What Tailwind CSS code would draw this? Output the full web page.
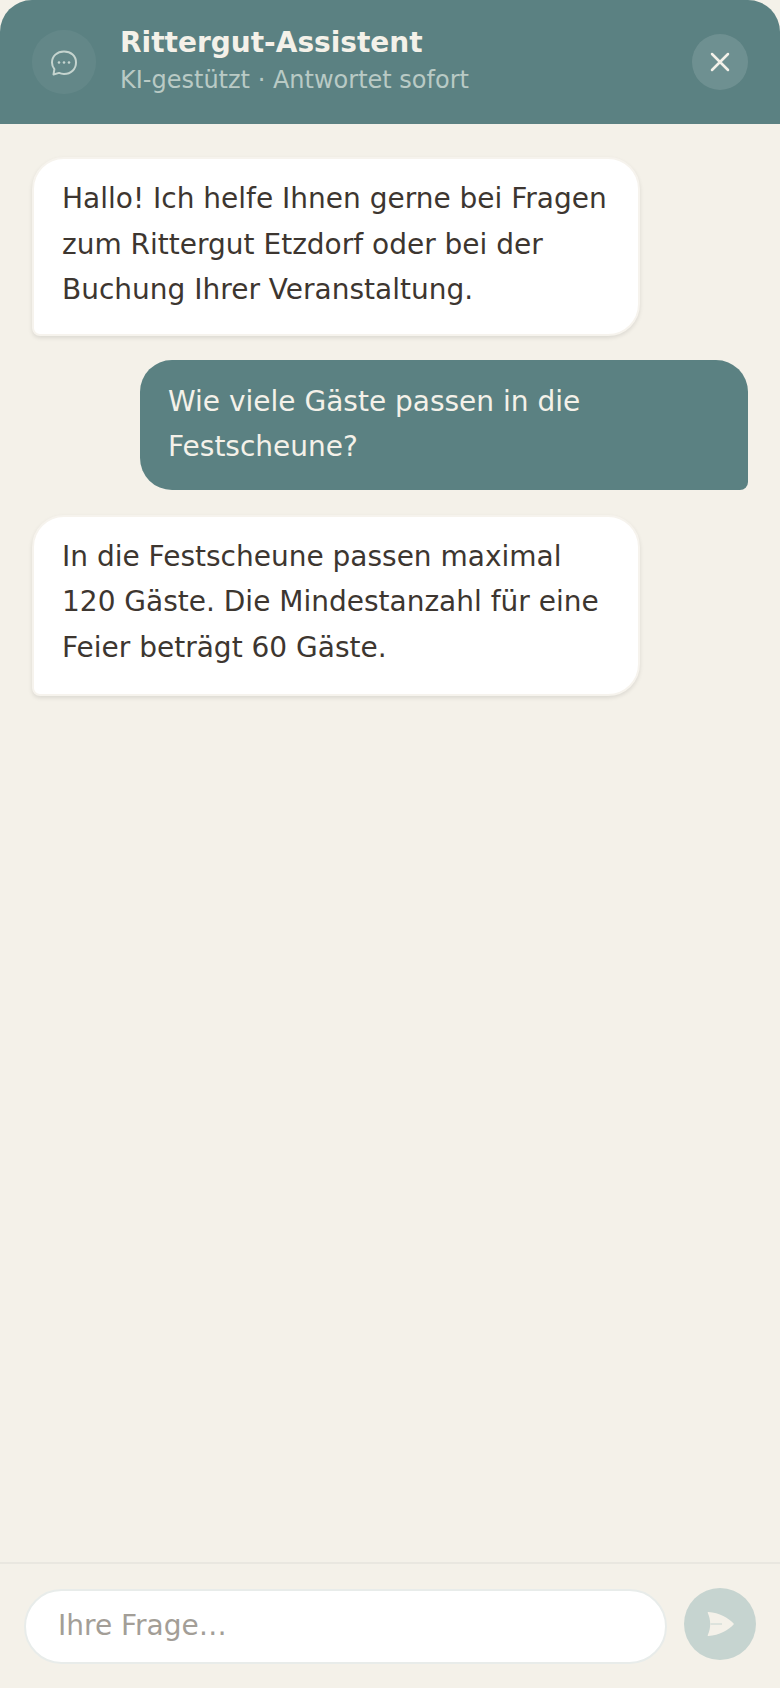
<!DOCTYPE html>
<html lang="de">
<head>
  <meta charset="UTF-8" />
  <meta name="viewport" content="width=device-width, initial-scale=1.0" />
  <title>Rittergut-Assistent</title>
  <script src="https://cdn.jsdelivr.net/npm/@tailwindcss/browser@4"></script>
</head>
<body class="bg-[#f4f1e9] font-['DejaVu_Sans',sans-serif]">
  <div class="w-[780px] h-[1688px] bg-[#f4f1e9] flex flex-col overflow-hidden">

    <!-- Header -->
    <div class="h-[124px] shrink-0 bg-[#5b8182] rounded-t-[32px] flex items-center pl-8 pr-8">
      <div class="w-16 h-16 rounded-full bg-white/5 flex items-center justify-center shrink-0">
        <svg width="30" height="30" viewBox="0 -1 30 30" fill="none" stroke="#c5d4cf" stroke-width="2" stroke-linejoin="round">
          <path d="M15 3.500c-7 0-12 4.700-12 11 0 2.600.9 4.900 2.400 6.700l-.9 5.300 5.600-1.600c1.500.7 3.100 1 4.900 1 7 0 12-4.800 12-11.400S22 3.500 15 3.500z"/>
          <circle cx="10" cy="14.500" r="1.300" fill="#c5d4cf" stroke="none"/>
          <circle cx="15" cy="14.500" r="1.300" fill="#c5d4cf" stroke="none"/>
          <circle cx="20" cy="14.500" r="1.300" fill="#c5d4cf" stroke="none"/>
        </svg>
      </div>
      <div class="ml-6 flex-1">
        <div class="text-[28px] leading-[36px] font-bold text-[#f4f1e9] -mt-px">Rittergut-Assistent</div>
        <div class="text-[24px] leading-[36px] text-[#b9cac5] mt-px">KI-gestützt · Antwortet sofort</div>
      </div>
      <button class="w-14 h-14 rounded-full bg-white/12 flex items-center justify-center">
        <svg width="24" height="24" viewBox="0 0 24 24" fill="none" stroke="#f4f1e9" stroke-width="2.500" stroke-linecap="round">
          <path d="M4 4l16 16M20 4L4 20"/>
        </svg>
      </button>
    </div>

    <!-- Messages -->
    <div class="flex-1 flex flex-col gap-6 pt-[33px] px-8">
      <div class="w-[608px] bg-white border-2 border-[#f6f3ed] rounded-[32px] rounded-bl-[8px] pl-7 pr-7 pt-[17px] pb-[21px] text-[28px] leading-[45.5px] text-[#3d3630] shadow-[0_2px_4px_rgba(0,0,0,0.1)]">
        Hallo! Ich helfe Ihnen gerne bei Fragen zum Rittergut Etzdorf oder bei der Buchung Ihrer Veranstaltung.
      </div>
      <div class="w-[608px] self-end bg-[#5b8182] rounded-[32px] rounded-br-[8px] px-7 pt-[19px] pb-5 text-[28px] leading-[45.5px] text-[#f4f1e9]">
        Wie viele Gäste passen in die Festscheune?
      </div>
      <div class="w-[608px] mt-px bg-white border-2 border-[#f6f3ed] rounded-[32px] rounded-bl-[8px] pl-7 pr-7 pt-[17px] pb-[24px] text-[28px] leading-[45.5px] text-[#3d3630] shadow-[0_2px_4px_rgba(0,0,0,0.1)]">
        In die Festscheune passen maximal 120 Gäste. Die Mindestanzahl für eine Feier beträgt 60 Gäste.
      </div>
    </div>

    <!-- Input -->
    <div class="h-[126px] shrink-0 border-t-2 border-[#e9e7e0] flex items-start gap-[17px] pl-6 pr-6 pt-6">
      <input placeholder="Ihre Frage…" class="w-[643px] h-[75px] mt-px rounded-full bg-white border-2 border-[#e8ecea] pl-8 pr-8 pb-[3px] text-[28px] text-[#3d3630] placeholder:text-[#a39e97] outline-none" />
      <button class="w-[72px] h-[72px] rounded-full bg-[#c6d4d0] flex items-center justify-center shrink-0">
        <svg width="27" height="24" viewBox="0 0 27 24">
          <path fill="#f4f1e9" d="M1.500 0C12 .5 22 6 27 12 22 18 12 23.500 1.500 24 .8 24 .5 23.500.8 23 2.400 19.500 3.200 15.800 3.200 12 3.200 8.200 2.400 4.500.8 1 .5.500.8 0 1.500 0z"/>
          <path stroke="#c6d4d0" stroke-width="1" d="M3.500 12H15"/>
        </svg>
      </button>
    </div>
  </div>
</body>
</html>
